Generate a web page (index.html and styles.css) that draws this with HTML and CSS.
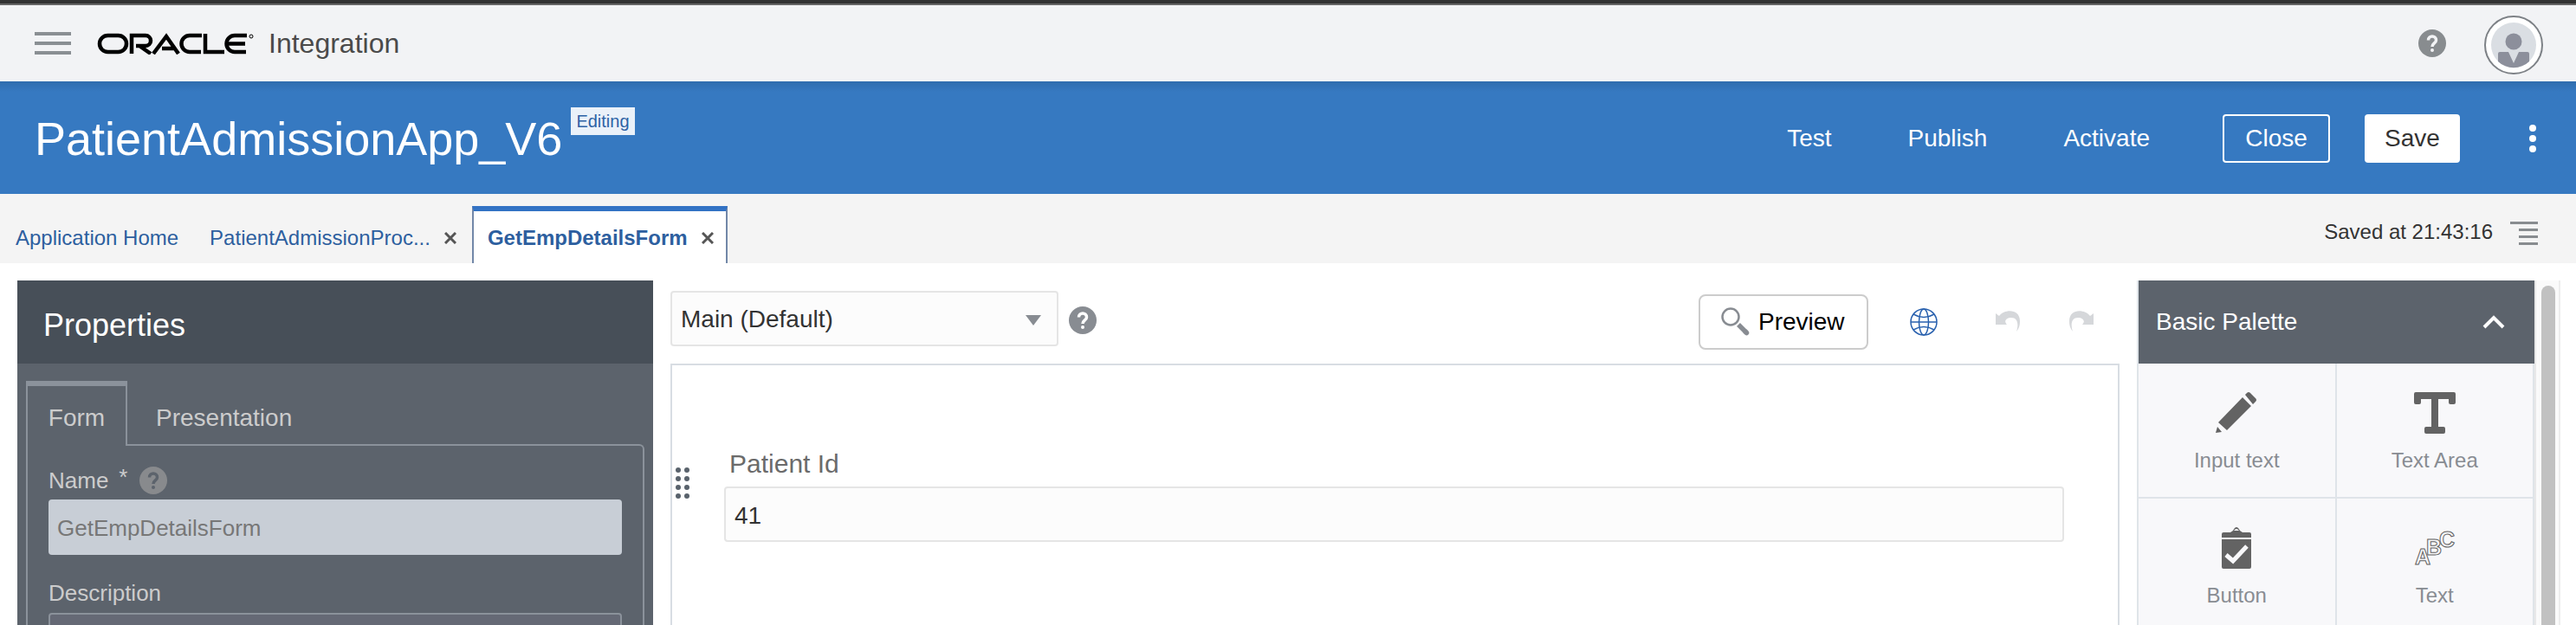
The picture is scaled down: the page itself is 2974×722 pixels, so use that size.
FILE: index.html
```html
<!DOCTYPE html>
<html lang="en">
<head>
<meta charset="utf-8">
<title>PatientAdmissionApp_V6 - Oracle Integration</title>
<link rel="stylesheet" href="styles.css">
</head>
<body>
<div class="app">
  <header class="topbar">
    <button class="icon-btn" aria-label="Navigation menu">
      <svg width="42" height="26" viewBox="0 0 42 26" fill="#8a8f93"><path d="M0 0h42v4H0zM0 11h42v4H0zM0 22h42v4H0z"/></svg>
    </button>
    <svg class="logo" width="182" height="26" viewBox="0 0 182 26" role="img" aria-label="Oracle" fill="none" stroke="#000" stroke-width="4.500">
      <rect x="3" y="4" width="31" height="19" rx="9.500"/>
      <path d="M40 25V4h16a6 6 0 0 1 0 12H45M49 16l13 9"/>
      <path d="M65 25L80 5l14 20M75 19h14"/>
      <path d="M121 4h-14a9.500 9.500 0 0 0 0 19h13"/>
      <path d="M125 2v21h22"/>
      <path d="M173 4h-14a9.500 9.500 0 0 0 0 19h13M151 13.500h20"/>
      <circle cx="178" cy="5" r="2" stroke-width="1"/>
    </svg>
    <span class="product">Integration</span>
    <span class="spacer"></span>
    <button class="icon-btn" aria-label="Help">
      <svg width="32" height="32" viewBox="0 0 32 32"><circle cx="16" cy="16" r="16" fill="#888c8f"/><path d="M11.500 12.500c0-6 9-6 9 0 0 3.500-4.500 3.500-4.500 7.500" fill="none" stroke="#f2f3f5" stroke-width="3.500"/><circle cx="16" cy="24" r="2" fill="#f2f3f5"/></svg>
    </button>
    <button class="icon-btn avatar" aria-label="User menu">
      <svg width="68" height="68" viewBox="0 0 68 68"><circle cx="34" cy="34" r="33" fill="#fff" stroke="#7d8186" stroke-width="2"/><circle cx="34" cy="34" r="26" fill="#dadee3"/><circle cx="34" cy="30" r="9.500" fill="#8c8f9b"/><path d="M16 44q0-2 2-2h10l6 13 6-13h10q2 0 2 2v9a26 26 0 0 1-36 0z" fill="#8c8f9b"/></svg>
    </button>
  </header>

  <section class="appbar">
    <h1 class="app-title">PatientAdmissionApp_V6</h1>
    <span class="badge">Editing</span>
    <span class="spacer"></span>
    <button class="action">Test</button>
    <button class="action">Publish</button>
    <button class="action">Activate</button>
    <button class="action outlined">Close</button>
    <button class="action solid">Save</button>
    <button class="icon-btn" aria-label="More actions">
      <svg width="8" height="32" viewBox="0 0 8 32" fill="#fff"><circle cx="4" cy="4" r="4"/><circle cx="4" cy="16" r="4"/><circle cx="4" cy="28" r="4"/></svg>
    </button>
  </section>

  <nav class="tabs">
    <a class="tab" href="#">Application Home</a>
    <span class="tab"><a href="#">PatientAdmissionProc...</a><button class="icon-btn" aria-label="Close PatientAdmissionProc"><svg width="14" height="14" viewBox="0 0 14 14"><path d="M1 1l12 12M13 1L1 13" stroke="#555" stroke-width="3"/></svg></button></span>
    <span class="tab active"><a href="#">GetEmpDetailsForm</a><button class="icon-btn" aria-label="Close GetEmpDetailsForm"><svg width="14" height="14" viewBox="0 0 14 14"><path d="M1 1l12 12M13 1L1 13" stroke="#555" stroke-width="3"/></svg></button></span>
    <span class="spacer"></span>
    <span class="saved">Saved at 21:43:16</span>
    <button class="icon-btn list-btn" aria-label="Open list"><svg width="32" height="27" viewBox="0 0 32 27" fill="#888c8f"><path d="M0 0h32v3H0zM10 8h22v3H10zM10 16h22v3H10zM10 24h22v3H10z"/></svg></button>
  </nav>

  <main class="workspace">
    <aside class="properties">
      <h2 class="properties-title">Properties</h2>
      <div class="prop-tabs">
        <button class="prop-tab selected">Form</button>
        <button class="prop-tab">Presentation</button>
      </div>
      <div class="prop-body">
        <div class="prop-label"><label for="form-name">Name</label><span class="required">*</span>
          <svg width="32" height="32" viewBox="0 0 32 32"><circle cx="16" cy="16" r="16" fill="#888a8d"/><path d="M11.500 12.500c0-6 9-6 9 0 0 3.500-4.500 3.500-4.500 7.500" fill="none" stroke="#5c636c" stroke-width="3.500"/><circle cx="16" cy="24" r="2" fill="#5c636c"/></svg>
        </div>
        <input class="prop-input" id="form-name" type="text" value="GetEmpDetailsForm" disabled>
        <label class="prop-label" for="form-description">Description</label>
        <textarea class="prop-area" id="form-description"></textarea>
      </div>
    </aside>

    <section class="editor">
      <div class="toolbar">
        <div class="select-wrap">
          <select class="view-select" aria-label="Presentation"><option>Main (Default)</option></select>
        </div>
        <svg class="help" width="32" height="32" viewBox="0 0 32 32"><circle cx="16" cy="16" r="16" fill="#888c92"/><path d="M11.500 12.500c0-6 9-6 9 0 0 3.500-4.500 3.500-4.500 7.500" fill="none" stroke="#fff" stroke-width="3.500"/><circle cx="16" cy="24" r="2" fill="#fff"/></svg>
        <span class="spacer"></span>
        <button class="preview"><svg width="34" height="34" viewBox="0 0 34 34" fill="none" stroke="#888c92"><circle cx="11" cy="11" r="9.500" stroke-width="2.500"/><path d="M20 20l9.500 9.500" stroke-width="5.500"/><path d="M28 28l1.500 1.500" stroke-width="5.500" stroke-linecap="round"/></svg>Preview</button>
        <button class="icon-btn globe" aria-label="Language"><svg width="32" height="32" viewBox="0 0 32 32" fill="none" stroke="#2860ae" stroke-width="1.500"><circle cx="16" cy="16" r="15"/><ellipse cx="16" cy="16" rx="5.500" ry="15"/><path d="M1 16h30M4 7q12 7 24 0M4 25q12-7 24 0"/></svg></button>
        <button class="icon-btn undo" aria-label="Undo" disabled><svg width="28" height="24" viewBox="0 0 28 24" fill="#d5d7da"><path d="M0 3l4 3C10-2 28-3 28 12c0 5-1 8-4 12 3-9 1-16-6-16-6 0-9 4-5 8H0z"/></svg></button>
        <button class="icon-btn redo" aria-label="Redo" disabled><svg width="28" height="24" viewBox="0 0 28 24" fill="#d5d7da"><path d="M28 3l-4 3C18-2 0-3 0 12c0 5 1 8 4 12-3-9-1-16 6-16 6 0 9 4 5 8h13z"/></svg></button>
      </div>
      <div class="canvas">
        <svg class="grip" width="16" height="36" viewBox="0 0 16 36" fill="#59626c"><circle cx="3" cy="3" r="3"/><circle cx="13" cy="3" r="3"/><circle cx="3" cy="13" r="3"/><circle cx="13" cy="13" r="3"/><circle cx="3" cy="23" r="3"/><circle cx="13" cy="23" r="3"/><circle cx="3" cy="33" r="3"/><circle cx="13" cy="33" r="3"/></svg>
        <div class="field">
          <label class="field-label" for="patient-id">Patient Id</label>
          <input class="field-input" id="patient-id" type="text" value="41">
        </div>
      </div>
    </section>

    <aside class="palette">
      <button class="palette-head"><span>Basic Palette</span><svg width="26" height="16" viewBox="0 0 26 16"><path d="M2 14L13 3l11 11" fill="none" stroke="#fff" stroke-width="4"/></svg></button>
      <div class="palette-grid">
        <button class="item"><svg width="48" height="48" viewBox="0 0 48 48" fill="#636363"><path d="M31 6l10 10-28 28L3 35zM34 3l2-2q2-2 4 0l6 6q2 2 0 4l-3 3zM2 40l5 6-7 1z"/></svg>Input text</button>
        <button class="item"><svg width="48" height="48" viewBox="0 0 48 48" fill="#636363"><path d="M2 0h44q2 0 2 2v10q0 2-2 2h-4q-2 0-2-2V8H28v32h6q2 0 2 2v4q0 2-2 2H14q-2 0-2-2v-4q0-2 2-2h6V8H8v4q0 2-2 2H2q-2 0-2-2V2q0-2 2-2z"/></svg>Text Area</button>
        <button class="item"><svg width="48" height="48" viewBox="0 0 48 48"><path fill="#636363" d="M7 12V8q0-2 2-2h8l3-2q4-8 8 0l3 2h8q2 0 2 2v4zM7 14h34v32q0 2-2 2H9q-2 0-2-2z"/><path d="M21 4q3-4 6 0z" fill="#f8f8fa"/><path d="M12 32l8 7 16-17" fill="none" stroke="#f8f8fa" stroke-width="5"/></svg>Button</button>
        <button class="item"><svg class="abc" width="48" height="48" viewBox="0 0 48 48"><text x="1" y="43">A</text><text x="14" y="32">B</text><text x="29" y="23">C</text></svg>Text</button>
      </div>
    </aside>
    <div class="scrollbar"><div class="thumb"></div></div>
  </main>
</div>
</body>
</html>
```
FILE: styles.css
```css
* {
  box-sizing: border-box;
}

body {
  margin: 0;
  font-family: "Liberation Sans", Arial, sans-serif;
  font-size: 28px;
  color: #333;
  background: #fff;
}

button,
input,
select,
textarea {
  font: inherit;
  color: inherit;
}

button {
  border: 0;
  padding: 0;
  background: none;
}

svg {
  display: block;
  flex: none;
}

a {
  color: inherit;
  text-decoration: none;
}

.app {
  display: flex;
  flex-direction: column;
  height: 100vh;
  overflow: hidden;
}

.spacer {
  flex: 1;
}

.topbar {
  display: flex;
  align-items: center;
  height: 94px;
  flex: none;
  padding: 2px 38px 0 40px;
  border-top: 4px solid #333;
  background: linear-gradient(#666 2px, #f2f3f5 2px);
}

.logo {
  margin-left: 30px;
}

.product {
  margin-left: 16px;
  font-size: 32px;
  color: #4a4a4a;
}

.avatar {
  margin: 4px 0 0 44px;
}

.appbar {
  display: flex;
  align-items: center;
  height: 130px;
  flex: none;
  padding: 2px 46px 0 40px;
  color: #fff;
  background: linear-gradient(#2f6dae, #3679c1 12px);
}

.app-title {
  margin: 0;
  font-size: 54px;
  font-weight: normal;
}

.badge {
  align-self: flex-start;
  margin: 28px 0 0 10px;
  padding: 0 6px;
  font-size: 20px;
  line-height: 32px;
  color: #2e62a5;
  background: #eaf1f9;
}

.action {
  height: 56px;
  margin-right: 88px;
}

.outlined {
  width: 124px;
  margin: 0 40px 0 -4px;
  border: 2px solid #fff;
  border-radius: 4px;
}

.solid {
  width: 110px;
  margin-right: 80px;
  border-radius: 4px;
  color: #333;
  background: #fff;
}

.tabs {
  display: flex;
  align-items: flex-end;
  height: 80px;
  flex: none;
  padding: 0 44px 0 0;
  font-size: 24px;
  color: #2d5f9f;
  background: #f4f4f4;
}

.tab {
  display: flex;
  align-items: center;
  gap: 16px;
  height: 66px;
  padding: 2px 18px 0;
  border-top: 6px solid transparent;
}

.active {
  padding: 2px 14px 0 16px;
  border: 2px solid #7287a8;
  border-width: 6px 2px 0;
  border-top-color: #3272c4;
  font-weight: bold;
  background: #fff;
}

.saved {
  align-self: center;
  margin-top: 8px;
  color: #333;
}

.list-btn {
  align-self: center;
  margin: 10px 0 0 20px;
}

.workspace {
  display: flex;
  flex: 1;
  min-height: 0;
  padding: 20px 18px 0 20px;
}

.properties {
  width: 734px;
  flex: none;
  display: flex;
  flex-direction: column;
  color: #ccc;
  background: #5c636c;
}

.properties-title {
  flex: none;
  height: 96px;
  margin: 0;
  padding: 8px 30px 0;
  font-size: 36px;
  font-weight: normal;
  line-height: 88px;
  color: #fff;
  background: #474f58;
}

.prop-tabs {
  display: flex;
  margin: 20px 10px 0;
  position: relative;
  z-index: 1;
}

.prop-tab {
  height: 75px;
  padding: 10px 33px 0;
}

.selected {
  width: 117px;
  padding: 4px 0 0;
  border: 2px solid #8b929b;
  border-width: 6px 2px 0;
  background: #5c636c;
}

.prop-body {
  flex: 1;
  min-height: 0;
  overflow: hidden;
  margin: -2px 10px 0 10px;
  padding: 24px 24px 0;
  border: 2px solid #8b929b;
  border-bottom: 0;
  border-radius: 0 6px 0 0;
}

.prop-label {
  display: flex;
  align-items: center;
  height: 32px;
  font-size: 26px;
}

.required {
  align-self: flex-start;
  margin: 0 14px 0 12px;
  line-height: 24px;
}

.prop-input {
  display: block;
  width: 100%;
  height: 64px;
  margin: 6px 0 28px;
  padding: 2px 10px 0;
  border: 0;
  border-radius: 4px;
  font-size: 26px;
  color: #777;
  background: #c8ced6;
}

.prop-area {
  display: block;
  width: 100%;
  height: 120px;
  margin-top: 7px;
  border: 2px solid #8b929b;
  border-radius: 4px;
  background: #656975;
  resize: none;
}

.editor {
  flex: 1;
  display: flex;
  flex-direction: column;
  padding: 0 20px;
}

.toolbar {
  display: flex;
  align-items: flex-start;
  height: 96px;
  flex: none;
  padding-top: 12px;
}

.select-wrap {
  position: relative;
  width: 448px;
}

.select-wrap::after {
  content: "";
  position: absolute;
  top: 28px;
  right: 20px;
  border: 9px solid transparent;
  border-top: 12px solid #888c92;
  border-bottom: 0;
  pointer-events: none;
}

.view-select {
  width: 100%;
  height: 64px;
  padding: 0 10px;
  border: 2px solid #e5e5e5;
  border-radius: 4px;
  background: #fcfcfc;
  appearance: none;
}

.help {
  margin: 18px 0 0 12px;
}

.preview {
  display: flex;
  align-items: center;
  gap: 9px;
  width: 196px;
  height: 64px;
  margin-top: 4px;
  padding: 0 24px;
  border: 2px solid #ccc;
  border-radius: 8px;
  color: #000;
}

.globe {
  margin: 20px 0 0 48px;
}

.undo {
  margin: 23px 0 0 67px;
}

.redo {
  margin: 23px 30px 0 57px;
}

.canvas {
  flex: 1;
  display: flex;
  padding: 98px 62px 0 4px;
  border: 2px solid #d8dde3;
  border-bottom: 0;
}

.grip {
  margin-top: 20px;
}

.field {
  flex: 1;
  margin-left: 40px;
}

.field-label {
  display: block;
  padding-left: 6px;
  font-size: 30px;
  line-height: 32px;
  color: #6b6b6b;
}

.field-input {
  display: block;
  width: 100%;
  height: 64px;
  margin-top: 10px;
  padding: 3px 10px 0;
  border: 2px solid #e5e5e5;
  border-radius: 4px;
  background: #fcfcfc;
}

.palette {
  width: 461px;
  flex: none;
  border-left: 2px solid #dfe4e9;
  border-right: 2px solid #e8e8e8;
}

.palette-head {
  display: flex;
  align-items: center;
  justify-content: space-between;
  width: 100%;
  height: 96px;
  padding: 0 34px 0 20px;
  color: #fff;
  background: #5c636c;
}

.palette-grid {
  display: grid;
  grid-template-columns: 1fr 1fr;
}

.item {
  display: flex;
  flex-direction: column;
  align-items: center;
  gap: 17px;
  height: 156px;
  padding-top: 33px;
  border: 2px solid #dfe4e9;
  border-width: 0 2px 2px 0;
  font-size: 24px;
  color: #888c92;
  background: #f8f8fa;
}

.abc {
  font-size: 25px;
  font-weight: bold;
  fill: #f8f8fa;
  stroke: #636363;
  stroke-width: 1;
}

.scrollbar {
  width: 28px;
  flex: none;
  padding: 6px 4px 0 6px;
  border-right: 2px solid #ededed;
  background: #fafafa;
}

.thumb {
  width: 16px;
  height: 100%;
  border-radius: 8px 8px 0 0;
  background: #c1c1c1;
}
```
